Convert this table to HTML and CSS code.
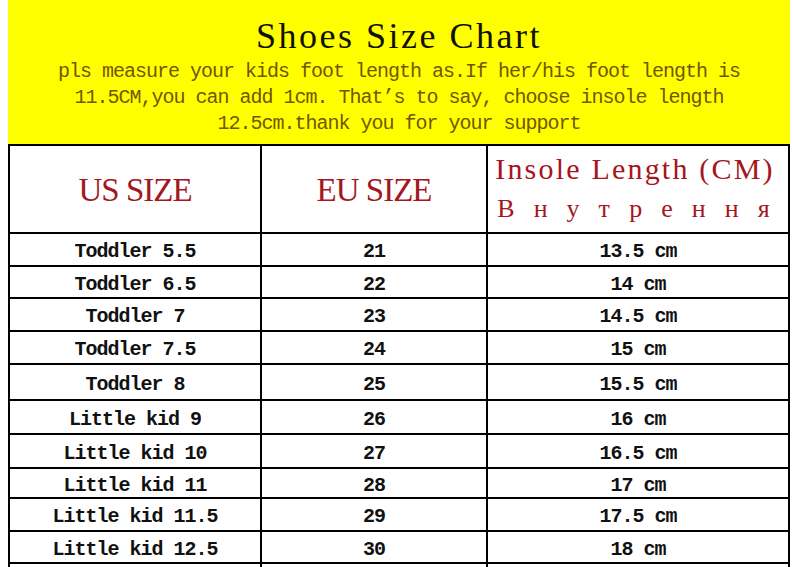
FILE: index.html
```html
<!DOCTYPE html>
<html lang="en">
<head>
<meta charset="utf-8">
<title>Shoes Size Chart</title>
<link rel="stylesheet" href="styles.css">
</head>
<body>
<div class="sheet">
  <header class="banner">
    <h1 class="title">Shoes Size Chart</h1>
    <p class="note">pls measure your kids foot length as.If her/his foot length is<br>11.5CM,you can add 1cm. That’s to say, choose insole length<br>12.5cm.thank you for your support</p>
  </header>
  <div class="chart">
    <div class="cell head">US SIZE</div>
    <div class="cell head">EU SIZE</div>
    <div class="cell head head-insole"><span class="en">Insole Length (CM)</span><span class="ru">Внутрення</span></div>

    <div class="cell">Toddler 5.5</div><div class="cell">21</div><div class="cell">13.5 cm</div>
    <div class="cell">Toddler 6.5</div><div class="cell">22</div><div class="cell">14 cm</div>
    <div class="cell">Toddler 7</div><div class="cell">23</div><div class="cell">14.5 cm</div>
    <div class="cell">Toddler 7.5</div><div class="cell">24</div><div class="cell">15 cm</div>
    <div class="cell">Toddler 8</div><div class="cell">25</div><div class="cell">15.5 cm</div>
    <div class="cell">Little kid 9</div><div class="cell">26</div><div class="cell">16 cm</div>
    <div class="cell">Little kid 10</div><div class="cell">27</div><div class="cell">16.5 cm</div>
    <div class="cell">Little kid 11</div><div class="cell">28</div><div class="cell">17 cm</div>
    <div class="cell">Little kid 11.5</div><div class="cell">29</div><div class="cell">17.5 cm</div>
    <div class="cell">Little kid 12.5</div><div class="cell">30</div><div class="cell">18 cm</div>
    <div class="cell"></div><div class="cell"></div><div class="cell"></div>
  </div>
</div>
</body>
</html>
```
FILE: styles.css
```css
html, body {
  margin: 0;
  padding: 0;
  background: #ffffff;
}

.sheet {
  margin-left: 8px;
  width: 782px;
}

.banner {
  background: #ffff00;
  height: 144px;
  box-sizing: border-box;
  padding-top: 16px;
  text-align: center;
}

.title {
  margin: 0;
  font-family: "Liberation Serif", serif;
  font-weight: normal;
  font-size: 36px;
  line-height: 40px;
  letter-spacing: 2.5px;
  color: #111100;
}

.note {
  margin: 3px 0 0;
  font-family: "Liberation Mono", monospace;
  font-size: 20px;
  line-height: 26px;
  letter-spacing: -1px;
  color: #745600;
}

.chart {
  display: grid;
  grid-template-columns: 250px 224px 300px;
  grid-template-rows: 86px 31px 30px 31px 31px 34px 32px 32px 28px 31px 30px 31px;
  gap: 2px;
  padding: 2px;
  background: #000000;
}

.cell {
  background: #ffffff;
  display: flex;
  align-items: center;
  justify-content: center;
  box-sizing: border-box;
  padding-top: 4px;
  font-family: "Liberation Mono", monospace;
  font-weight: bold;
  font-size: 20px;
  letter-spacing: -1px;
  color: #111111;
  white-space: pre;
}

.head {
  padding-top: 3px;
  font-family: "Liberation Serif", serif;
  font-weight: normal;
  font-size: 33px;
  letter-spacing: -1px;
  color: #a5161e;
}

.head-insole {
  flex-direction: column;
  padding-top: 0;
  letter-spacing: 0;
}

.head-insole .en {
  display: block;
  font-size: 30px;
  line-height: 40px;
  letter-spacing: 2.2px;
  margin-right: 6px;
}

.head-insole .ru {
  display: block;
  font-size: 26px;
  line-height: 40px;
  letter-spacing: 19px;
  margin-right: -10px;
}
```
